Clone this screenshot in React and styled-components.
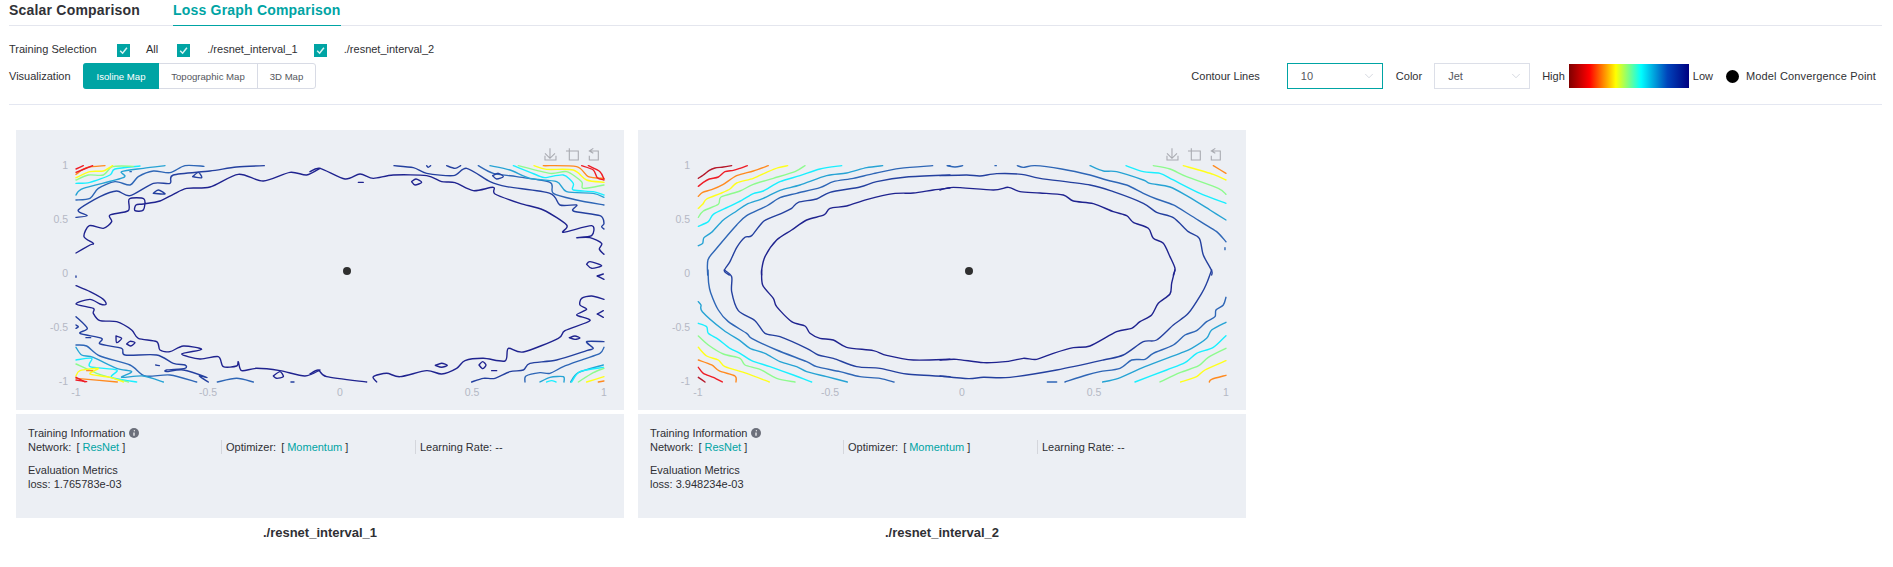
import React from 'react';
import styled, { createGlobalStyle } from 'styled-components';
import { ChevronDown } from 'lucide-react';

const Global = createGlobalStyle`
  html, body { margin: 0; padding: 0; background: #fff; }
  body { font-family: "Liberation Sans", Arial, sans-serif; color: #2f3034; }
`;

const Page = styled.div`
  width: 1893px;
  height: 567px;
  box-sizing: border-box;
  padding: 0 11px 0 9px;
  overflow: hidden;
`;
const TabBar = styled.div`
  display: flex;
  gap: 33px;
  height: 26px;
  box-sizing: border-box;
  border-bottom: 1px solid #e4e6ee;
`;
const Tab = styled.div`
  height: 26px;
  box-sizing: border-box;
  line-height: 20px;
  font-size: 14px;
  font-weight: 700;
  letter-spacing: 0.2px;
  color: ${p => (p.$active ? '#00a4a4' : '#303136')};
  border-bottom: 1px solid ${p => (p.$active ? '#00a4a4' : 'transparent')};
`;
const SelectionRow = styled.div`
  display: flex;
  align-items: flex-start;
  height: 13px;
  margin-top: 18px;
  font-size: 11px;
  line-height: 11px;
`;
const RowLabel = styled.span`
  width: ${p => p.$w}px;
  flex: none;
`;
const CheckItem = styled.label`
  display: flex;
  align-items: flex-start;
  gap: ${p => p.$gap}px;
  margin-right: ${p => p.$after}px;
`;
const CheckBox = styled.span`
  display: flex;
  align-items: center;
  justify-content: center;
  width: 13px;
  height: 13px;
  background: #00a4a4;
`;
const VisualRow = styled.div`
  display: flex;
  align-items: center;
  height: 26px;
  margin-top: 6px;
  padding-right: 6px;
  font-size: 11px;
`;
const Segments = styled.div`
  display: flex;
  height: 26px;
  box-sizing: border-box;
  border: 1px solid #d8dbe5;
  border-radius: 3px;
`;
const Segment = styled.div`
  width: ${p => p.$w}px;
  box-sizing: border-box;
  display: flex;
  align-items: center;
  justify-content: center;
  font-size: 9.6px;
  color: ${p => (p.$active ? '#fff' : '#55575e')};
  background: ${p => (p.$active ? '#00a4a4' : 'transparent')};
  margin: ${p => (p.$active ? '-1px 0 -1px -1px' : '0')};
  border-radius: ${p => (p.$active ? '3px 0 0 3px' : '0')};
  border-left: ${p => (p.$divide ? '1px solid #d8dbe5' : 'none')};
`;
const Legend = styled.div`
  display: flex;
  align-items: center;
  margin-left: auto;
`;
const LegendText = styled.span`
  margin-right: ${p => p.$after}px;
  letter-spacing: ${p => (p.$wide ? '0.15px' : '0')};
`;
const Select = styled.div`
  width: 96px;
  height: 26px;
  box-sizing: border-box;
  display: flex;
  align-items: center;
  justify-content: space-between;
  padding: 0 6px 0 13px;
  margin-right: ${p => p.$after}px;
  border: 1px solid ${p => (p.$focus ? '#00a4a4' : '#dcdfe8')};
  color: #55575e;
`;
const Ramp = styled.div`
  width: 120px;
  height: 24px;
  margin-right: 4px;
  background: linear-gradient(to right, #7f0000 0, #f00 17%, #ff0 39%, #0ff 60%, #04b 82%, #000080 100%);
`;
const BlackDot = styled.span`
  width: 13px;
  height: 13px;
  margin-right: 7px;
  border-radius: 50%;
  background: #000;
`;
const Divider = styled.div`
  height: 1px;
  margin-top: 15px;
  background: #e4e7f1;
`;
const Cards = styled.div`
  display: flex;
  gap: 14px;
  margin-top: 25px;
  padding-left: 7px;
`;
const Card = styled.div`
  width: 608px;
`;
const ChartBox = styled.div`
  height: 280px;
  background: #eceff4;
`;
const ChartSvg = styled.svg`
  display: block;
  width: 608px;
  height: 280px;
`;
const AxisText = styled.text`
  font-size: 10.5px;
  fill: #b4b8c4;
  dominant-baseline: central;
`;
const InfoBox = styled.div`
  height: 104px;
  box-sizing: border-box;
  margin-top: 4px;
  padding: 12px 12px 0;
  background: #eceff4;
  font-size: 11px;
  line-height: 14px;
`;
const InfoTitle = styled.div`
  display: flex;
  align-items: center;
  gap: 4px;
`;
const InfoGrid = styled.div`
  display: grid;
  grid-template-columns: 194px 194px 1fr;
`;
const InfoCell = styled.div`
  display: flex;
  height: 14px;
  padding-left: ${p => (p.$first ? 0 : 4)}px;
  margin-left: ${p => (p.$first ? 0 : -1)}px;
  border-left: ${p => (p.$first ? 'none' : '1px solid #d4d6dc')};
`;
const Bracket = styled.span`
  margin-left: 5px;
`;
const Accent = styled.span`
  color: #00a4a4;
  margin: 0 3px;
`;
const Metrics = styled.div`
  margin-top: 9px;
`;
const CardTitle = styled.div`
  margin-top: 6px;
  text-align: center;
  font-size: 13px;
  line-height: 18px;
  font-weight: 700;
  color: #2f3034;
`;

const NAVY = '#1f238f', L2 = '#24409f', L3 = '#2e66b6', L4 = '#26a3d4', CY = '#19efff', GR = '#8dfb8d', YE = '#ffff1a', OR = '#ff8a1f', RE = '#ee1c25', DR = '#b5182b';

const crops1 = [
  { x: 10, y: 125, lines: [
    [NAVY, '198,384 240,360 250,355 222,335 238,302 280,310 305,290 300,270 355,257 358,222 402,222 400,255 375,257 378,240 400,237 450,228 490,208 530,190 600,186 685,148 760,168 840,142 890,150 930,130'],
    [L2, '198,277 232,272 205,255 270,215 320,198 360,212 430,175 480,175 490,150 600,138 680,126 763,122'],
    [L2, '430,205 445,195 465,207 430,205'],
    [L2, '548,155 565,142 575,158 548,155'],
    [L3, '198,225 240,220 265,190 315,170 360,180 385,155 430,138 480,143 525,122 582,124'],
    [L4, '198,210 220,190 340,158 335,140 400,130 465,122'],
    [CY, '198,175 240,172 300,150 315,132 390,123'],
    [GR, '198,165 235,150 280,150 308,125 370,124'],
    [YE, '198,158 240,140 280,138 308,122'],
    [OR, '198,148 230,128 285,122'],
    [RE, '198,132 220,122'],
    [RE, '198,142 248,122'],
    [L3, '360,140 364,140'],
  ] },
  { x: 310, y: 125, lines: [
    [NAVY, '0,140 30,130 105,162 150,147 190,160 250,150 350,152 395,170 435,173 490,197 550,187 555,207 630,235 700,255 770,300 760,322 845,302 845,332 800,338 840,338 875,355 868,372 882,388'],
    [L2, '252,122 310,128 350,145 430,152 470,130 540,170 590,185 720,205 750,240 800,240 790,258 870,272 882,295 875,305 882,312'],
    [L3, '505,122 550,145 620,155 720,172 730,205 800,225 882,240'],
    [L4, '540,122 600,135 660,160 740,170 770,200 850,205 882,217'],
    [NAVY, '145,172 160,172'],
    [NAVY, '305,170 318,162 335,172 315,180 305,170'],
    [L2, '548,152 565,145 580,155 560,162 548,152'],
    [NAVY, '830,418 840,410 875,422 845,430 830,418'],
    [L2, '350,122 355,127 362,122'],
    [L2, '410,122 435,130 452,122'],
    [CY, '610,122 680,150 705,158 760,150 790,175 790,195 850,200 882,210'],
    [GR, '625,122 720,145 770,140 815,170 820,190 882,180'],
    [YE, '672,122 710,133 790,135 830,165 882,172'],
    [OR, '700,122 800,125 835,155 882,160'],
    [RE, '815,122 850,135 862,158 882,165'],
    [RE, '835,122 870,140 882,162'],
  ] },
  { x: 10, y: 270, lines: [
    [NAVY, '198,47 240,65 280,88 288,103 270,102 240,88 198,102 250,115 250,130 270,152 320,155 365,180 385,205 440,215 450,240 480,245 520,228 575,238 515,252 570,267 625,260 640,290 680,288 685,275 695,302 740,295 810,302 885,318 930,300'],
    [L2, '198,140 232,175 210,190 275,205 270,222 335,235 345,255 440,255 490,280 525,285 525,295 470,300 470,305 520,300 590,322 568,318 595,336'],
    [L3, '198,225 230,228 270,258 360,285 405,318 480,315 560,336'],
    [L4, '198,232 215,255 250,262 320,295 365,305 335,322 400,318 460,336'],
    [CY, '198,270 245,265 240,290 320,300 305,322 380,336'],
    [GR, '198,282 260,310 300,322 355,336'],
    [YE, '198,318 210,302 265,295 240,312 300,322 340,336'],
    [OR, '198,325 322,336'],
    [OR, '230,302 248,302'],
    [RE, '198,322 225,336'],
    [RE, '198,330 230,335'],
    [L2, '198,165 205,170 198,175'],
    [L2, '228,203 242,203'],
    [NAVY, '318,198 335,205 320,218 318,198'],
    [NAVY, '350,222 360,214 375,218 362,228 350,222'],
    [L2, '437,285 448,287'],
    [L3, '622,336 680,325 730,336'],
    [NAVY, '790,318 810,305 820,320 800,325 790,318'],
    [L2, '843,336 852,336'],
    [L2, '198,18 198,22'],
  ] },
  { x: 310, y: 270, lines: [
    [NAVY, '0,312 25,300 50,320 170,336'],
    [NAVY, '200,336 190,320 230,310 270,320 350,302 395,312 440,295 465,272 520,265 585,273 595,235 640,246 745,205 765,182 840,152 800,135 830,118 810,105 815,85 845,78 882,88'],
    [L2, '485,336 520,325 555,325 600,305 640,300 660,280 740,270 830,242 850,235 830,215 882,215'],
    [L3, '645,336 648,318 690,308 720,310 760,290 820,268 870,250 882,232'],
    [L4, '690,336 720,322 760,320 762,336'],
    [L4, '782,336 805,308 880,285'],
    [CY, '710,336 725,332 738,336'],
    [CY, '785,336 810,305 880,292'],
    [GR, '805,336 850,308 882,295'],
    [YE, '830,336 882,320'],
    [OR, '865,336 882,333'],
    [NAVY, '862,18 880,12'],
    [NAVY, '862,18 882,28'],
    [NAVY, '862,132 880,122'],
    [NAVY, '862,132 880,142'],
    [NAVY, '376,286 395,280 412,286 395,292 376,286'],
    [NAVY, '507,285 518,275 528,285 518,296 507,285'],
    [NAVY, '545,302 560,302'],
    [NAVY, '778,203 795,198 810,204 795,208 778,203'],
  ] },
];

const crops2 = [
  { x: 640 - 622, y: 125, lines: [
    [DR, '175,160 190,150 208,136 225,129 250,126 275,122'],
    [RE, '175,184 190,172 208,162 235,156 255,140 280,136 300,130 322,122'],
    [OR, '175,214 188,202 215,194 250,178 290,152 340,138 385,122'],
    [YE, '175,250 188,238 200,222 240,206 270,192 290,174 340,160 380,142 415,128 443,122'],
    [GR, '175,277 190,258 235,238 243,216 300,198 340,178 400,160 465,140 495,122'],
    [CY, '175,304 205,290 220,268 265,246 305,226 340,206 370,198 420,170 480,152 540,132 605,122'],
    [L4, '175,362 188,355 192,338 215,322 250,285 290,258 320,238 370,220 420,196 480,180 560,152 620,144 680,128 728,122'],
    [L3, '203,450 204,404 230,370 290,300 320,272 380,243 420,218 470,205 540,188 580,170 640,160 700,146 780,130 878,122'],
    [L3, '922,122 930,122'],
    [L2, '268,450 253,437 270,410 290,368 315,337 335,332 372,288 425,265 455,250 475,232 530,222 570,202 660,186 710,170 800,156 930,150'],
    [NAVY, '365,450 365,435 375,395 410,345 455,315 500,285 552,270 570,250 620,243 680,224 760,206 820,204 880,195 930,189'],
  ] },
  { x: 940 - 622, y: 125, lines: [
    [L3, '22,122 45,126 68,122'],
    [L3, '165,122 169,122'],
    [L3, '232,122 250,127 285,122 365,132 450,150 500,165 560,180 610,205 650,222 700,240 750,270 790,295 830,320 858,350'],
    [L3, '855,368 855,374'],
    [L2, '0,152 80,150 120,153 170,146 245,148 300,160 450,180 520,200 610,235 650,262 700,278 745,320 778,340 790,390 815,437 815,450'],
    [NAVY, '0,195 40,187 160,195 205,187 240,200 300,204 370,210 400,228 460,236 520,260 560,272 580,292 625,310 640,340 670,355 690,395 705,430 700,450'],
    [L4, '450,122 490,138 530,140 610,165 630,175 690,186 745,215 810,255 858,285'],
    [CY, '558,122 610,140 660,145 700,165 780,205 858,235'],
    [GR, '640,122 690,132 740,155 835,190 858,208'],
    [YE, '730,122 820,148 858,165'],
    [OR, '820,122 858,145'],
  ] },
  { x: 640 - 622, y: 270, lines: [
    [L4, '175,95 183,105 187,125 250,180 300,212 330,235 375,250 420,275 470,290 500,305 560,320 622,336'],
    [L3, '204,0 206,40 212,68 235,120 265,155 320,190 335,205 410,240 500,275 530,290 600,305 660,320 720,325 762,336'],
    [L2, '253,0 275,20 275,65 295,122 345,152 375,190 420,200 500,235 535,255 580,265 650,290 720,295 800,312 930,320'],
    [NAVY, '365,0 368,45 400,85 410,110 455,155 495,168 510,190 540,205 580,210 620,232 700,242 740,256 820,270 930,268'],
    [CY, '175,160 200,170 205,190 235,208 270,235 300,250 335,272 390,290 460,315 515,336'],
    [GR, '175,198 205,225 250,252 300,265 315,285 360,298 410,325 465,336'],
    [YE, '175,232 200,258 235,270 255,290 320,310 388,336'],
    [OR, '175,270 215,285 238,303 285,318 288,336'],
    [RE, '175,292 190,310 220,322 247,336'],
    [DR, '175,322 195,336'],
  ] },
  { x: 940 - 622, y: 270, lines: [
    [NAVY, '705,0 695,40 690,72 655,100 635,135 600,155 575,175 530,185 450,228 400,233 340,250 290,268 250,265 205,274 130,278 50,268 0,270'],
    [L2, '815,0 800,40 785,70 745,130 700,165 650,210 610,215 550,255 490,270 350,300 210,322 130,322 85,326 0,318'],
    [L3, '858,82 850,105 828,120 825,140 800,155 770,182 735,195 700,225 640,250 615,268 575,270 540,295 480,305 440,315 375,336'],
    [L3, '322,336 350,336'],
    [L4, '858,157 815,180 800,205 755,235 720,250 615,290 535,325 488,336'],
    [CY, '858,197 820,232 770,250 735,278 680,300 585,336'],
    [GR, '858,235 805,262 775,288 720,308 660,336'],
    [YE, '858,272 795,300 770,320 722,336'],
    [OR, '858,316 815,328 808,336'],
  ] },
];

const toolPaths = [
  'M720 70V100M705 85L720 100L735 85M705 92V105H738V92',
  'M768 78H805V105H778V70',
  'M850 70L838 78L850 85M838 78H865V105H838V92',
];

const xTicks = [['-1', 60], ['-0.5', 192], ['0', 324], ['0.5', 456], ['1', 588]];
const yTicks = [['1', 35], ['0.5', 89], ['0', 143], ['-0.5', 197], ['-1', 251]];

// Catmull-Rom spline through the traced contour points
function smoothPath(str) {
  const p = str.split(' ').map(s => s.split(',').map(Number));
  const t = 0.14;
  let d = `M${p[0][0]} ${p[0][1]}`;
  for (let i = 0; i < p.length - 1; i++) {
    const a = p[Math.max(i - 1, 0)];
    const b = p[i];
    const c = p[i + 1];
    const e = p[Math.min(i + 2, p.length - 1)];
    d += `C${b[0] + (c[0] - a[0]) * t} ${b[1] + (c[1] - a[1]) * t} ${c[0] - (e[0] - b[0]) * t} ${c[1] - (e[1] - b[1]) * t} ${c[0]} ${c[1]}`;
  }
  return d;
}

function Chart({ crops }) {
  return (
    <ChartBox>
      <ChartSvg viewBox="0 0 608 280">
        {yTicks.map(([t, y]) => (
          <AxisText key={t} x={52} y={y} textAnchor="end">{t}</AxisText>
        ))}
        {xTicks.map(([t, x]) => (
          <AxisText key={t} x={x} y={262} textAnchor="middle">{t}</AxisText>
        ))}
        {crops.map(c => (
          <g key={c.x + '-' + c.y} transform={`translate(${c.x - 16} ${c.y - 130}) scale(0.3333)`}>
            {c.lines.map(([color, pts], i) => (
              <path key={i} d={smoothPath(pts)} fill="none" stroke={color} strokeWidth="4.2" strokeLinejoin="round" strokeLinecap="round" />
            ))}
          </g>
        ))}
        <g transform="translate(294 -5) scale(0.3333)">
          {toolPaths.map(d => (
            <path key={d} d={d} fill="none" stroke="#a8aab0" strokeWidth="3.2" />
          ))}
        </g>
        <circle cx={331} cy={141} r={4} fill="#2f2f2f" />
      </ChartSvg>
    </ChartBox>
  );
}

const InfoIcon = () => (
  <svg width="10" height="10" viewBox="0 0 10 10">
    <circle cx="5" cy="5" r="5" fill="#6c707b" />
    <path d="M5.4 2.2v1.1M5 4.4v3.4" stroke="#fff" strokeWidth="1.2" />
  </svg>
);

const CheckMark = () => (
  <svg width="11" height="11" viewBox="0 0 11 11">
    <path d="M2.2 5.8L4.6 8.2L8.9 2.8" fill="none" stroke="#d8f3f2" strokeWidth="1.5" />
  </svg>
);

function RunCard({ name, loss, crops }) {
  return (
    <Card>
      <Chart crops={crops} />
      <InfoBox>
        <InfoTitle>Training Information <InfoIcon /></InfoTitle>
        <InfoGrid>
          <InfoCell $first>Network:<Bracket>[</Bracket><Accent>ResNet</Accent>]</InfoCell>
          <InfoCell>Optimizer:<Bracket>[</Bracket><Accent>Momentum</Accent>]</InfoCell>
          <InfoCell>Learning Rate: --</InfoCell>
        </InfoGrid>
        <Metrics>
          <div>Evaluation Metrics</div>
          <div>loss: {loss}</div>
        </Metrics>
      </InfoBox>
      <CardTitle>{name}</CardTitle>
    </Card>
  );
}

export default function App() {
  return (
    <Page>
      <Global />
      <TabBar>
        <Tab>Scalar Comparison</Tab>
        <Tab $active>Loss Graph Comparison</Tab>
      </TabBar>
      <SelectionRow>
        <RowLabel $w={108}>Training Selection</RowLabel>
        <CheckItem $gap={16} $after={19}><CheckBox><CheckMark /></CheckBox>All</CheckItem>
        <CheckItem $gap={17} $after={16}><CheckBox><CheckMark /></CheckBox>./resnet_interval_1</CheckItem>
        <CheckItem $gap={17} $after={0}><CheckBox><CheckMark /></CheckBox>./resnet_interval_2</CheckItem>
      </SelectionRow>
      <VisualRow>
        <RowLabel $w={74}>Visualization</RowLabel>
        <Segments>
          <Segment $w={76} $active>Isoline Map</Segment>
          <Segment $w={98}>Topographic Map</Segment>
          <Segment $w={58} $divide>3D Map</Segment>
        </Segments>
        <Legend>
          <LegendText $after={27}>Contour Lines</LegendText>
          <Select $focus $after={13}>10<ChevronDown size={14} strokeWidth={1} color="#b9bdca" /></Select>
          <LegendText $after={12}>Color</LegendText>
          <Select $after={12}>Jet<ChevronDown size={14} strokeWidth={1} color="#b9bdca" /></Select>
          <LegendText $after={4}>High</LegendText>
          <Ramp />
          <LegendText $after={13}>Low</LegendText>
          <BlackDot />
          <LegendText $after={0} $wide>Model Convergence Point</LegendText>
        </Legend>
      </VisualRow>
      <Divider />
      <Cards>
        <RunCard name="./resnet_interval_1" loss="1.765783e-03" crops={crops1} />
        <RunCard name="./resnet_interval_2" loss="3.948234e-03" crops={crops2} />
      </Cards>
    </Page>
  );
}
